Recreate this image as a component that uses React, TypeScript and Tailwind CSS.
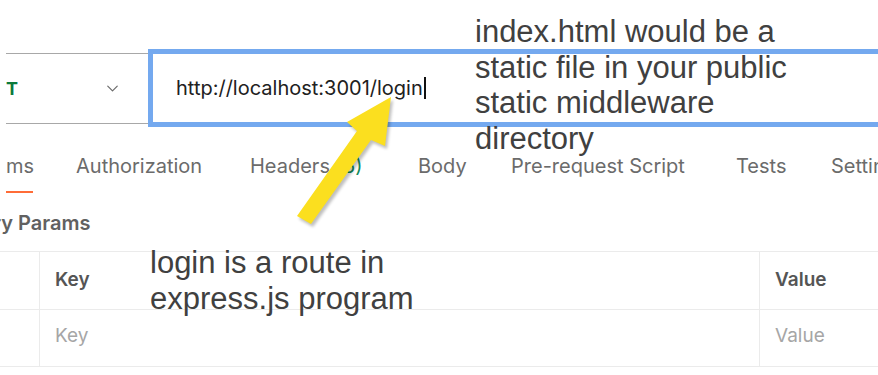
import { ChevronDown } from 'lucide-react';

const tabs = [
  { label: 'ms', w: 'w-[70px]' },
  { label: 'Authorization', w: 'w-[174px]' },
  { label: 'Headers', count: '(6)', w: 'w-[168px]' },
  { label: 'Body', w: 'w-[93px]' },
  { label: 'Pre-request Script', w: 'w-[225px]' },
  { label: 'Tests', w: 'w-[95px]' },
  { label: 'Settings', w: 'w-[120px]' },
];

function Arrow() {
  const pts = '297,216 357,131 347,122 391,97 385,146 371,140 311,224';
  return (
    <svg className="absolute left-0 top-0 pointer-events-none" width="878" height="375" viewBox="0 0 878 375">
      <defs>
        <filter id="sh" x="-20%" y="-20%" width="140%" height="140%">
          <feGaussianBlur stdDeviation="1.5" />
        </filter>
      </defs>
      <polygon points={pts} fill="#000" opacity="0.25" transform="translate(2,3)" filter="url(#sh)" />
      <polygon points={pts} fill="#fbdf1f" />
    </svg>
  );
}

export default function App() {
  return (
    <div className="relative w-[878px] h-[375px] overflow-hidden bg-white font-['Inter',sans-serif]">
      {/* cut off line at the very top */}
      <div className="h-[12px] overflow-hidden">
        <div className="mt-[-25px] ml-[30px] text-[22px] leading-[22px] text-[#222] font-['Liberation_Sans',Arial,sans-serif] whitespace-nowrap">
          http://localhost:3001/login
        </div>
      </div>

      {/* method + url */}
      <div className="flex mt-[37px] mr-[-20px]">
        <div className="ml-[6px] w-[142px] mt-[4px] h-[71px] border-y border-[#a8a8a8] flex items-center justify-between pr-[26px]">
          <span className="text-[18px] font-bold text-[#0b7a3b] leading-none">T</span>
          <ChevronDown className="w-[19px] h-[19px] text-[#6b6b6b]" strokeWidth={1.5} />
        </div>
        <div className="flex-1 h-[78px] border-[5px] border-[#74a9ef] flex items-center pl-[23px]">
          <span className="text-[20px] text-[#212121] whitespace-nowrap">http://localhost:3001/login</span>
          <span className="w-[2px] h-[22px] bg-[#111] ml-[1px]" />
        </div>
      </div>

      {/* tabs */}
      <div className="flex mt-[18px] h-[42px] items-center ml-[6px] whitespace-nowrap">
        {tabs.map(t => (
          <div key={t.label} className={`${t.w} shrink-0 text-[20px] text-[#6b6b6b]`}>
            {t.label}
            {t.count && <span className="text-[#0f8a5a]"> {t.count}</span>}
          </div>
        ))}
      </div>
      <div className="ml-[6px] mt-[4px] w-[27px] h-[2px] bg-[#ff6c37]" />

      <div className="mt-[18px] ml-[-7px] text-[20px] leading-[24px] font-semibold text-[#616161] whitespace-nowrap">
        ry Params
      </div>

      {/* params table */}
      <div className="mt-[16px] border-t border-[#ebebeb]">
        <div className="flex h-[58px] border-b border-[#ebebeb]">
          <div className="w-[40px] border-r border-[#ebebeb]" />
          <div className="w-[720px] border-r border-[#ebebeb] flex items-center pl-[15px] text-[19px] font-semibold text-[#555]">Key</div>
          <div className="flex-1 flex items-center pl-[15px] text-[19px] font-semibold text-[#555]">Value</div>
        </div>
        <div className="flex h-[57px] border-b border-[#ebebeb]">
          <div className="w-[40px] border-r border-[#ebebeb]" />
          <div className="w-[720px] border-r border-[#ebebeb] flex items-center pl-[15px] pb-[4px] text-[19px] text-[#a6a6a6]">Key</div>
          <div className="flex-1 flex items-center pl-[15px] pb-[4px] text-[19px] text-[#a6a6a6]">Value</div>
        </div>
      </div>

      {/* annotations */}
      <div className="absolute left-[475px] top-[14px] text-[31px] leading-[35.5px] text-[#404040] font-['Liberation_Sans',Arial,sans-serif] whitespace-nowrap">
        <div>index.html would be a</div>
        <div>static file in your public</div>
        <div>static middleware</div>
        <div>directory</div>
      </div>
      <div className="absolute left-[150px] top-[245px] text-[31px] leading-[35.5px] text-[#404040] font-['Liberation_Sans',Arial,sans-serif] whitespace-nowrap">
        <div>login is a route in</div>
        <div>express.js program</div>
      </div>

      <Arrow />
    </div>
  );
}
